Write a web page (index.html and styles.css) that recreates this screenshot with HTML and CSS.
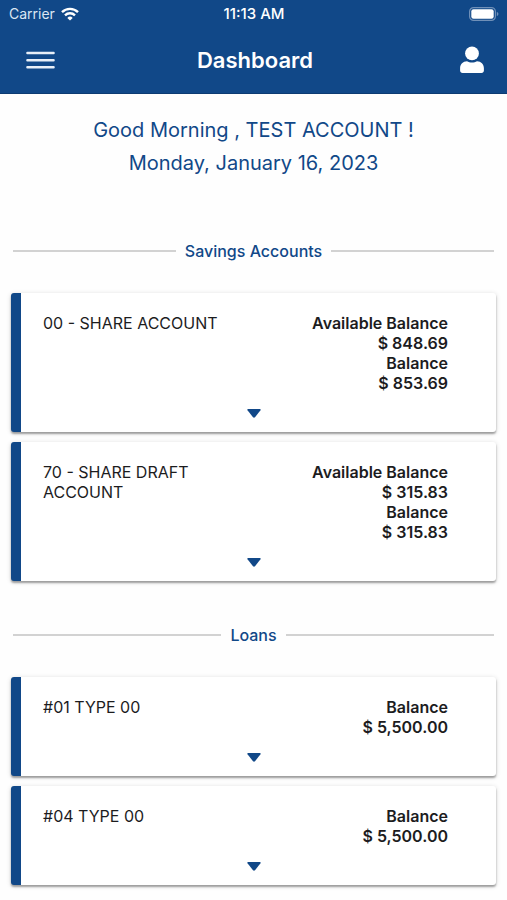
FILE: index.html
```html
<!DOCTYPE html>
<html lang="en">
<head>
<meta charset="utf-8">
<meta name="viewport" content="width=device-width, initial-scale=1">
<title>Dashboard</title>
<link rel="stylesheet" href="styles.css">
</head>
<body>
<header class="header">
  <div class="status">
    <div class="carrier">
      <span>Carrier</span>
      <svg width="18" height="14" viewBox="0 0 18 14" fill="none" stroke="#fff" stroke-width="2.4" aria-hidden="true">
        <path d="M1 5.2a11.4 11.4 0 0 1 16 0"/>
        <path d="M4 8.3a7.2 7.2 0 0 1 10 0"/>
        <path d="M9 13.6 6.3 10.9a3.9 3.9 0 0 1 5.4 0z" fill="#fff" stroke="none"/>
      </svg>
    </div>
    <span class="time">11:13 AM</span>
    <svg class="battery" width="30" height="14" viewBox="0 0 30 14" aria-hidden="true">
      <rect x=".6" y=".6" width="25.8" height="12.8" rx="4" fill="none" stroke="#7090b8" stroke-width="1.2"/>
      <rect x="2.3" y="2.3" width="22.4" height="9.4" rx="2.2" fill="#fff"/>
      <path d="M27.8 5v4c1-.4 1.6-1.1 1.6-2s-.6-1.6-1.6-2z" fill="#7090b8"/>
    </svg>
  </div>
  <div class="toolbar">
    <button class="icon-button" type="button" aria-label="Menu">
      <svg width="29" height="18" viewBox="0 0 29 18" stroke="#e8eff8" stroke-width="2.4" stroke-linecap="round" aria-hidden="true">
        <path d="M1.4 2h26.2M1.4 9.2h26.2M1.4 16.2h26.2"/>
      </svg>
    </button>
    <h1 class="title">Dashboard</h1>
    <button class="icon-button end" type="button" aria-label="Profile">
      <svg width="24" height="28" viewBox="0 0 24 28" fill="#fff" aria-hidden="true">
        <circle cx="12" cy="7.4" r="6.9"/>
        <path d="M7 15.2c1.4.8 3.100 1.300 5 1.300s3.600-.5 5-1.300c4 0 6.900 3 6.900 7v2.400c0 1.400-1 2.400-2.400 2.400h-19c-1.400 0-2.400-1-2.400-2.400v-2.400c0-4 2.900-7 6.900-7z"/>
      </svg>
    </button>
  </div>
</header>
<main class="content">
  <div class="greeting">
    <p>Good Morning , TEST ACCOUNT !</p>
    <p>Monday, January 16, 2023</p>
  </div>

  <section class="group">
    <h2 class="heading">Savings Accounts</h2>
    <article class="card">
      <div class="details">
        <h3 class="name">00 - SHARE ACCOUNT</h3>
        <dl class="amounts"><dt>Available Balance</dt><dd>$ 848.69</dd><dt>Balance</dt><dd>$ 853.69</dd></dl>
      </div>
      <button class="expand" type="button" aria-label="Show 00 - SHARE ACCOUNT details"><svg width="14" height="9" viewBox="0 0 14 9" aria-hidden="true"><path d="M1 0h12q1 .2.500 1.300L8 8.300q-1 .9-2 0L.5 1.300Q0 .2 1 0z"/></svg></button>
    </article>
    <article class="card">
      <div class="details">
        <h3 class="name">70 - SHARE DRAFT ACCOUNT</h3>
        <dl class="amounts"><dt>Available Balance</dt><dd>$ 315.83</dd><dt>Balance</dt><dd>$ 315.83</dd></dl>
      </div>
      <button class="expand" type="button" aria-label="Show 70 - SHARE DRAFT ACCOUNT details"><svg width="14" height="9" viewBox="0 0 14 9" aria-hidden="true"><path d="M1 0h12q1 .2.500 1.300L8 8.300q-1 .9-2 0L.5 1.300Q0 .2 1 0z"/></svg></button>
    </article>
  </section>

  <section class="group">
    <h2 class="heading">Loans</h2>
    <article class="card">
      <div class="details">
        <h3 class="name">#01 TYPE 00</h3>
        <dl class="amounts"><dt>Balance</dt><dd>$ 5,500.00</dd></dl>
      </div>
      <button class="expand" type="button" aria-label="Show #01 TYPE 00 details"><svg width="14" height="9" viewBox="0 0 14 9" aria-hidden="true"><path d="M1 0h12q1 .2.500 1.300L8 8.300q-1 .9-2 0L.5 1.300Q0 .2 1 0z"/></svg></button>
    </article>
    <article class="card">
      <div class="details">
        <h3 class="name">#04 TYPE 00</h3>
        <dl class="amounts"><dt>Balance</dt><dd>$ 5,500.00</dd></dl>
      </div>
      <button class="expand" type="button" aria-label="Show #04 TYPE 00 details"><svg width="14" height="9" viewBox="0 0 14 9" aria-hidden="true"><path d="M1 0h12q1 .2.500 1.300L8 8.300q-1 .9-2 0L.5 1.300Q0 .2 1 0z"/></svg></button>
    </article>
  </section>
</main>
</body>
</html>
```
FILE: styles.css
```css
:root {
  --blue: #114888;
}

* {
  box-sizing: border-box;
  margin: 0;
  padding: 0;
}

body {
  background: #fefefe;
  color: #1c1c1e;
  font: 400 16px/20px Inter, "Liberation Sans", sans-serif;
}

svg {
  display: block;
}

button {
  background: none;
  border: 0;
  cursor: pointer;
}

.header {
  background: var(--blue);
  border-bottom: 1px solid #0d3b72;
  color: #fff;
}

.status {
  display: grid;
  grid-template-columns: 1fr auto 1fr;
  align-items: center;
  padding: 4px 8px 0 9px;
  font-size: 14px;
}

.carrier {
  display: flex;
  align-items: center;
  gap: 6px;
  color: #dbe6f3;
}

.time {
  font-size: 15px;
  font-weight: 500;
}

.battery {
  justify-self: end;
}

.toolbar {
  display: grid;
  grid-template-columns: 1fr auto 1fr;
  align-items: center;
  height: 69px;
  padding: 2px 23px 0 26px;
}

.icon-button {
  justify-self: start;
}

.icon-button.end {
  justify-self: end;
}

.title {
  font-size: 22px;
  font-weight: 600;
  line-height: 28px;
}

.content {
  padding: 20px 11px 12px;
}

.greeting {
  color: var(--blue);
  font-size: 20px;
  line-height: 33px;
  text-align: center;
}

.group {
  display: grid;
  gap: 10px;
  margin-top: 44px;
}

.greeting + .group {
  margin-top: 61px;
}

.heading {
  display: flex;
  align-items: center;
  gap: 9px;
  padding: 0 2px;
  margin-bottom: 22px;
  color: var(--blue);
  font-size: 16px;
  font-weight: 500;
}

.heading::before,
.heading::after {
  content: "";
  flex: 1;
  height: 2px;
  background: #d2d2d2;
}

.card {
  background: #fff;
  border-left: 10px solid var(--blue);
  border-radius: 3px;
  box-shadow: 0 2px 2px rgba(0, 0, 0, .32), 0 1px 5px rgba(0, 0, 0, .16);
}

.details {
  display: flex;
  justify-content: space-between;
  gap: 16px;
  padding: 20px 48px 0 22px;
}

.name {
  max-width: 180px;
  font-size: 16px;
  font-weight: 400;
}

.amounts {
  font-weight: 600;
  text-align: right;
}

.expand {
  display: flex;
  justify-content: center;
  align-items: center;
  width: 100%;
  height: 39px;
  padding: 2px 10px 0 0;
  fill: var(--blue);
}
```
